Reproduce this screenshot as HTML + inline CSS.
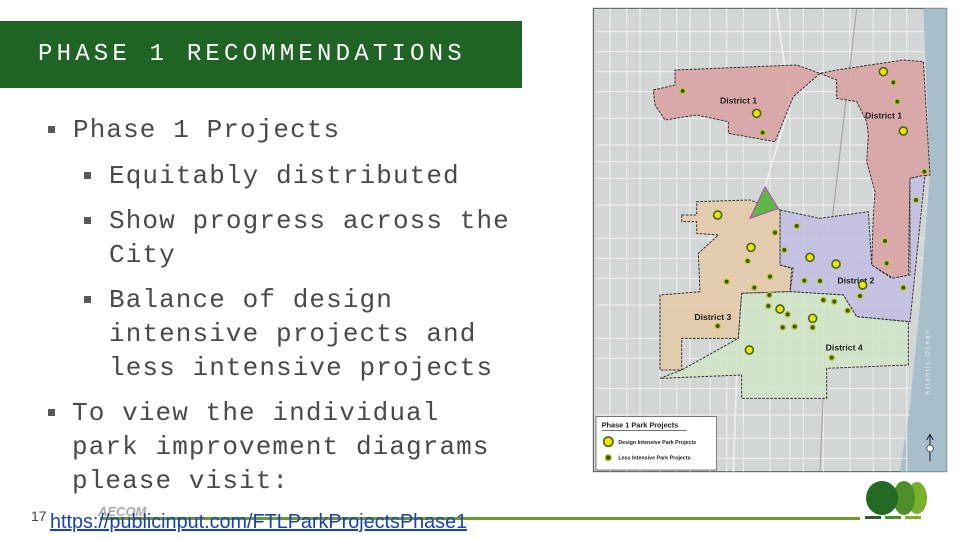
<!DOCTYPE html>
<html><head><meta charset="utf-8"><style>
body{margin:0;width:960px;height:540px;overflow:hidden;background:#fff;position:relative;font-family:"Liberation Mono",monospace;}
.title{position:absolute;left:0;top:21px;width:522px;height:67px;background:#1f6325;}
.title span{position:absolute;left:38px;top:20px;color:#fff;font-size:24px;letter-spacing:4.2px;line-height:28px;}
.t{position:absolute;color:#4a4a4a;font-size:26px;letter-spacing:1.1px;line-height:34px;white-space:pre;}
.b{position:absolute;width:7px;height:7px;background:#595959;}
</style></head><body>
<div class="title"><span>PHASE 1 RECOMMENDATIONS</span></div>
<div class="b" style="left:48px;top:126px"></div>
<div class="t" style="left:73px;top:113px">Phase 1 Projects</div>
<div class="b" style="left:84px;top:172px"></div>
<div class="t" style="left:109px;top:159px">Equitably distributed</div>
<div class="b" style="left:84px;top:217px"></div>
<div class="t" style="left:109px;top:204px">Show progress across the
City</div>
<div class="b" style="left:84px;top:296px"></div>
<div class="t" style="left:109px;top:283px">Balance of design
intensive projects and
less intensive projects</div>
<div class="b" style="left:48px;top:409px"></div>
<div class="t" style="left:72px;top:396px">To view the individual
park improvement diagrams
please visit:</div>
<div style="position:absolute;left:100px;top:517px;width:760px;height:3px;background:#6b9a2e"></div>
<div style="position:absolute;left:98px;top:504px;font:italic bold 13px 'Liberation Sans',sans-serif;color:#aaa">AECOM</div>
<div style="position:absolute;left:31px;top:508px;font:14px 'Liberation Sans',sans-serif;color:#444">17</div>
<div style="position:absolute;left:50px;top:511px;font:20px 'Liberation Sans',sans-serif;color:#1a3fbf;text-decoration:underline;transform:scaleX(0.99);transform-origin:left;white-space:nowrap">https://publicinput.com/FTLParkProjectsPhase1</div>
<svg style="position:absolute;left:860px;top:478px" width="70" height="44">
<ellipse cx="57" cy="20" rx="10" ry="16" fill="#7ab02c"/>
<ellipse cx="44" cy="20" rx="11" ry="17" fill="#4f8f2a"/>
<ellipse cx="22" cy="20" rx="16" ry="17" fill="#236b25"/>
<rect x="5" y="38" width="16" height="3" fill="#2e5a2e"/><rect x="25" y="38" width="16" height="3" fill="#4f8f2a"/><rect x="45" y="38" width="16" height="3" fill="#7ab02c"/>
</svg>
<svg style="position:absolute;left:590px;top:5px" width="360" height="470" viewBox="0 0 1080 1410">
<rect x="10" y="10" width="1060" height="1390" fill="#d2d6d5" stroke="#555" stroke-width="3"/>
<path d="M1000 10 L1070 10 L1070 1400 L930 1400 L960 1200 L990 900 L1020 500 Z" fill="#a7bfca"/>
<g stroke="#f4f4f4" stroke-width="3" fill="none" opacity="0.9">
<path d="M20 80H1000M20 140H1000M20 200H1000M20 260H1000M20 340H1000M20 420H1000M20 470H1000M20 520H1000M20 600H1000M20 700H1000M20 760H1000M20 820H980M20 900H980M20 1000H960M20 1060H960M20 1150H960M20 1230H960M20 1300H950M20 1360H950"/>
<path d="M60 10V1400M110 10V1400M150 10V1400M210 10V1400M260 10V1400M300 10V1400M360 10V1400M410 10V1400M460 10V1400M540 10V1400M600 10V1400M640 10V1400M700 10V1400M780 10V1400M850 10V1400M900 10V1400M950 10V1400"/>
<path d="M560 10 L600 300 L520 560 L450 800 L430 1400" stroke="#eee" stroke-width="6"/>
<path d="M800 10 L720 700 L690 1400" stroke="#999" stroke-width="3"/>
</g>
<polygon points="190,255 255,240 255,195 620,180 690,205 610,275 555,410 415,385 415,350 320,330 225,345 195,300" fill="#d9a3a3" fill-opacity="0.9" stroke="#333" stroke-width="3" stroke-dasharray="8,4"/>
<polygon points="690,205 740,225 740,280 800,290 830,350 835,390 830,470 855,560 850,630 845,780 910,820 955,810 960,520 1020,510 1000,170 940,165 740,195" fill="#d9a3a3" fill-opacity="0.9" stroke="#333" stroke-width="3" stroke-dasharray="8,4"/>
<polygon points="570,615 690,640 835,620 845,780 905,820 960,810 960,520 1005,510 960,950 800,935 760,870 600,860 610,790 570,780" fill="#c3c0e2" fill-opacity="0.9" stroke="#333" stroke-width="3" stroke-dasharray="8,4"/>
<polygon points="275,630 320,630 320,590 480,585 520,600 570,615 570,780 605,790 600,860 455,865 445,1000 275,1000 275,1095 210,1095 210,870 330,860 325,745 385,690 320,685 320,650 275,650" fill="#e3cba8" fill-opacity="0.9" stroke="#333" stroke-width="3" stroke-dasharray="8,4"/>
<polygon points="455,865 600,860 760,870 800,935 955,950 955,1080 710,1090 710,1180 455,1180 455,1110 210,1120 275,1095 445,1000" fill="#d0e6c8" fill-opacity="0.9" stroke="#333" stroke-width="3" stroke-dasharray="8,4"/>
<polygon points="480,640 525,545 565,610" fill="#5db845" stroke="#c3c" stroke-width="3"/>
<g font-family="Liberation Sans,sans-serif" font-weight="bold" font-size="26" fill="#222">
<text x="390" y="295">District 1</text><text x="825" y="340">District 1</text>
<text x="742" y="835">District 2</text><text x="313" y="945">District 3</text><text x="707" y="1037">District 4</text>
</g>
<g fill="#f2e20a" stroke="#4a6a1a" stroke-width="5">
<circle cx="880" cy="200" r="12"/><circle cx="500" cy="325" r="12"/><circle cx="940" cy="378" r="12"/><circle cx="383" cy="630" r="12"/><circle cx="483" cy="727" r="12"/><circle cx="660" cy="757" r="12"/><circle cx="738" cy="777" r="12"/><circle cx="818" cy="840" r="12"/><circle cx="570" cy="912" r="12"/><circle cx="668" cy="940" r="12"/><circle cx="478" cy="1035" r="12"/>
</g>
<g fill="#2f5a1c" stroke="#c8c830" stroke-width="4">
<circle cx="278" cy="258" r="8"/><circle cx="910" cy="232" r="8"/><circle cx="922" cy="290" r="8"/><circle cx="518" cy="383" r="8"/><circle cx="1003" cy="500" r="8"/><circle cx="978" cy="585" r="8"/><circle cx="620" cy="663" r="8"/><circle cx="555" cy="683" r="8"/><circle cx="583" cy="735" r="8"/><circle cx="885" cy="708" r="8"/><circle cx="890" cy="775" r="8"/><circle cx="473" cy="768" r="8"/><circle cx="643" cy="827" r="8"/><circle cx="690" cy="828" r="8"/><circle cx="540" cy="815" r="8"/><circle cx="410" cy="830" r="8"/><circle cx="493" cy="848" r="8"/><circle cx="538" cy="870" r="8"/><circle cx="810" cy="873" r="8"/><circle cx="940" cy="848" r="8"/><circle cx="700" cy="885" r="8"/><circle cx="733" cy="890" r="8"/><circle cx="773" cy="917" r="8"/><circle cx="535" cy="903" r="8"/><circle cx="593" cy="928" r="8"/><circle cx="578" cy="967" r="8"/><circle cx="614" cy="965" r="8"/><circle cx="668" cy="967" r="8"/><circle cx="383" cy="963" r="8"/><circle cx="725" cy="1058" r="8"/>
</g>
<text x="1018" y="1170" transform="rotate(-90 1018 1170)" font-family="Liberation Sans,sans-serif" font-size="20" fill="#eef" letter-spacing="5">Atlantic Ocean</text>
<rect x="18" y="1235" width="362" height="160" fill="#fff" stroke="#444" stroke-width="2"/>
<g font-family="Liberation Sans,sans-serif" font-weight="bold" fill="#222">
<text x="35" y="1268" font-size="22">Phase 1 Park Projects</text>
<line x1="35" y1="1276" x2="290" y2="1276" stroke="#222" stroke-width="2"/>
<circle cx="55" cy="1310" r="14" fill="#f2e20a" stroke="#4a6a1a" stroke-width="5"/>
<text x="85" y="1317" font-size="16">Design Intensive Park Projects</text>
<circle cx="55" cy="1358" r="9" fill="#2f5a1c" stroke="#c8c830" stroke-width="4"/>
<text x="85" y="1364" font-size="16">Less Intensive Park Projects</text>
</g>
<path d="M1020 1290 V1370 M1010 1305 L1020 1288 L1030 1305" stroke="#222" stroke-width="3" fill="none"/>
<circle cx="1020" cy="1330" r="10" fill="#fff" stroke="#222" stroke-width="2"/>
</svg>
</body></html>
